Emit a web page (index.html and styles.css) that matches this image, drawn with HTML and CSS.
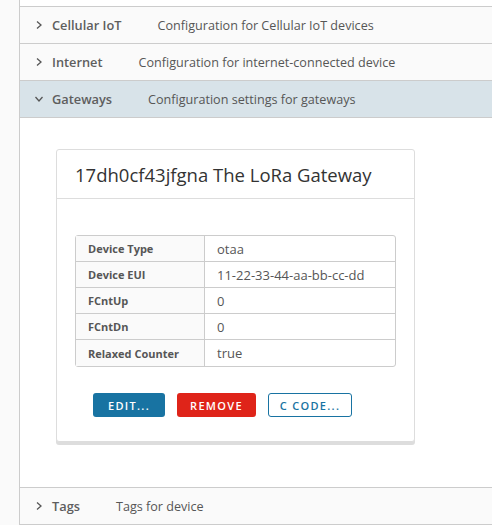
FILE: index.html
```html
<!DOCTYPE html>
<html>
<head>
<meta charset="utf-8">
<link rel="stylesheet" href="styles.css">
</head>
<body>
<div class="page">
  <div class="rail"></div>
  <div class="main">
    <div class="top-gap"></div>
    <div class="stack">
      <div class="row">
        <svg class="chev" width="10" height="10" viewBox="0 0 10 10"><path d="M3 1.5 L7 5 L3 8.5" fill="none" stroke="#565656" stroke-width="1.3"/></svg>
        <span class="title">Cellular IoT</span>
        <span class="desc">Configuration for Cellular IoT devices</span>
      </div>
      <div class="row">
        <svg class="chev" width="10" height="10" viewBox="0 0 10 10"><path d="M3 1.5 L7 5 L3 8.5" fill="none" stroke="#565656" stroke-width="1.3"/></svg>
        <span class="title">Internet</span>
        <span class="desc">Configuration for internet-connected device</span>
      </div>
      <div class="row open">
        <svg class="chev" width="10" height="10" viewBox="0 0 10 10"><path d="M1.5 3 L5 7 L8.5 3" fill="none" stroke="#565656" stroke-width="1.3"/></svg>
        <span class="title">Gateways</span>
        <span class="desc">Configuration settings for gateways</span>
      </div>
      <div class="content">
        <div class="card">
          <div class="card-header">17dh0cf43jfgna The LoRa Gateway</div>
          <div class="card-block">
            <table class="kv">
              <tr><th>Device Type</th><td>otaa</td></tr>
              <tr><th>Device EUI</th><td>11-22-33-44-aa-bb-cc-dd</td></tr>
              <tr><th>FCntUp</th><td>0</td></tr>
              <tr><th>FCntDn</th><td>0</td></tr>
              <tr><th>Relaxed Counter</th><td>true</td></tr>
            </table>
            <div class="actions">
              <button class="btn primary">EDIT...</button>
              <button class="btn danger">REMOVE</button>
              <button class="btn outline">C CODE...</button>
            </div>
          </div>
        </div>
      </div>
      <div class="row">
        <svg class="chev" width="10" height="10" viewBox="0 0 10 10"><path d="M3 1.5 L7 5 L3 8.5" fill="none" stroke="#565656" stroke-width="1.3"/></svg>
        <span class="title">Tags</span>
        <span class="desc">Tags for device</span>
      </div>
    </div>
  </div>
</div>
</body>
</html>
```
FILE: styles.css
```css
* { box-sizing: border-box; }
html, body { margin: 0; padding: 0; }
body {
  font-family: "Open Sans", "Liberation Sans", sans-serif;
  color: #565656;
  background: #fff;
  width: 492px;
  height: 525px;
  overflow: hidden;
}
.page { display: flex; height: 525px; }
.rail { width: 20px; background: #fafafa; border-right: 1px solid #ccc; flex: none; }
.main { flex: 1; display: flex; flex-direction: column; }
.top-gap { height: 7px; background: #fff; }
.stack { border-top: 1px solid #ccc; }
.row {
  display: flex;
  align-items: center;
  height: 37px;
  padding-left: 14px;
  background: #fafafa;
  border-bottom: 1px solid #ccc;
  font-size: 13px;
}
.row.open { background: #d8e3e9; }
.chev { flex: none; margin-right: 8px; }
.title { font-weight: 600; font-size: 12.8px; color: #5e5e5e; margin-right: 36px; }
.desc { color: #565656; font-size: 12.6px; }
.content {
  background: #fff;
  padding: 31px 0 45px 36px;
  border-bottom: 1px solid #ccc;
}
.card {
  width: 359px;
  border: 1px solid #ddd;
  border-radius: 3px;
  box-shadow: 0 3px 0 0 #ddd;
  background: #fff;
}
.card-header {
  height: 49px;
  display: flex;
  align-items: center;
  padding: 0 18px;
  font-size: 18.5px;
  color: #333;
  border-bottom: 1px solid #ddd;
}
.card-block { padding: 36px 18px 24px; }
.kv {
  width: 100%;
  border-collapse: separate;
  border-spacing: 0;
  border: 1px solid #ccc;
  border-radius: 3px;
  font-size: 13px;
}
.kv th, .kv td {
  height: 26px;
  padding: 0 12px;
  text-align: left;
  border-bottom: 1px solid #ccc;
}
.kv tr:last-child th, .kv tr:last-child td { border-bottom: none; }
.kv th {
  width: 129px;
  background: #fafafa;
  font-size: 11px;
  font-weight: 700;
  border-right: 1px solid #ccc;
  color: #565656;
}
.kv td { color: #565656; }
.actions {
  display: flex;
  gap: 12px;
  margin-top: 26px;
  padding-left: 18px;
}
.btn {
  height: 24px;
  padding: 0;
  font-family: "Open Sans", "Liberation Sans", sans-serif;
  font-size: 11px;
  font-weight: 600;
  letter-spacing: 0.12em;
  white-space: nowrap;
  border-radius: 3px;
  border: 1px solid transparent;
  cursor: pointer;
}
.btn.primary { background: #1873a2; color: #fff; width: 72px; }
.btn.danger { background: #df2419; color: #fff; width: 79px; }
.btn.outline { background: #fff; color: #1873a2; border-color: #1873a2; width: 84px; }
```
